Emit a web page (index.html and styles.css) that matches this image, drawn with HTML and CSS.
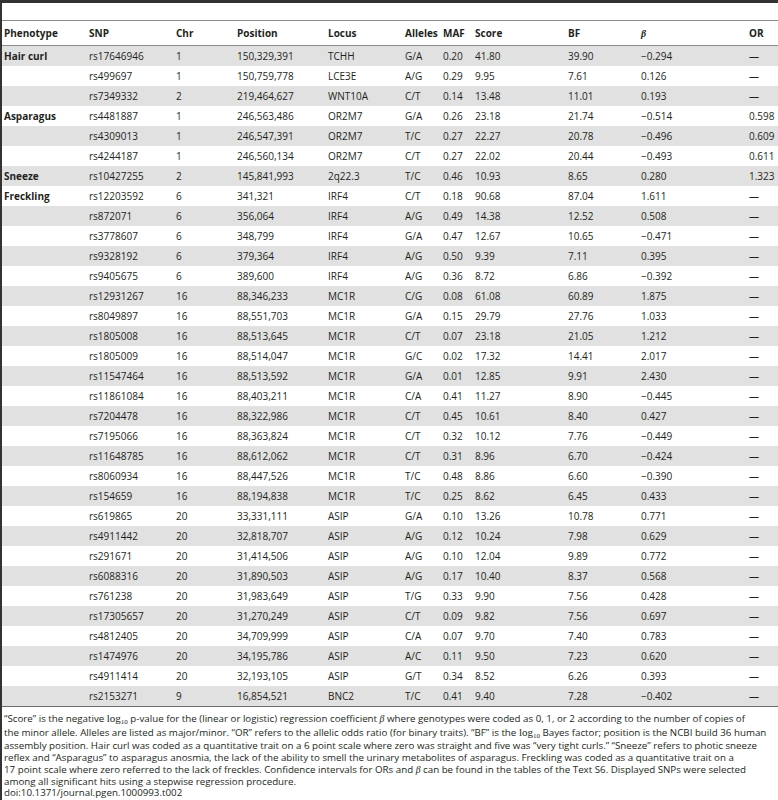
FILE: index.html
```html
<!DOCTYPE html>
<html>
<head>
<meta charset="utf-8">
<link rel="stylesheet" href="styles.css">
</head>
<body>
<div class="frame">
<table class="data">
<colgroup>
<col class="c1"><col class="c2"><col class="c3"><col class="c4"><col class="c5"><col class="c6"><col class="c7"><col class="c8"><col class="c9"><col class="c10"><col class="c11">
</colgroup>
<thead>
<tr><th>Phenotype</th><th>SNP</th><th>Chr</th><th>Position</th><th>Locus</th><th>Alleles</th><th>MAF</th><th>Score</th><th>BF</th><th><span class="beta">β</span></th><th>OR</th></tr>
</thead>
<tbody>
<tr><td class="ph">Hair curl</td><td>rs17646946</td><td>1</td><td>150,329,391</td><td>TCHH</td><td>G/A</td><td>0.20</td><td>41.80</td><td>39.90</td><td>&minus;0.294</td><td>—</td></tr>
<tr><td></td><td>rs499697</td><td>1</td><td>150,759,778</td><td>LCE3E</td><td>A/G</td><td>0.29</td><td>9.95</td><td>7.61</td><td>0.126</td><td>—</td></tr>
<tr><td></td><td>rs7349332</td><td>2</td><td>219,464,627</td><td>WNT10A</td><td>C/T</td><td>0.14</td><td>13.48</td><td>11.01</td><td>0.193</td><td>—</td></tr>
<tr><td class="ph">Asparagus</td><td>rs4481887</td><td>1</td><td>246,563,486</td><td>OR2M7</td><td>G/A</td><td>0.26</td><td>23.18</td><td>21.74</td><td>&minus;0.514</td><td>0.598</td></tr>
<tr><td></td><td>rs4309013</td><td>1</td><td>246,547,391</td><td>OR2M7</td><td>T/C</td><td>0.27</td><td>22.27</td><td>20.78</td><td>&minus;0.496</td><td>0.609</td></tr>
<tr><td></td><td>rs4244187</td><td>1</td><td>246,560,134</td><td>OR2M7</td><td>C/T</td><td>0.27</td><td>22.02</td><td>20.44</td><td>&minus;0.493</td><td>0.611</td></tr>
<tr><td class="ph">Sneeze</td><td>rs10427255</td><td>2</td><td>145,841,993</td><td>2q22.3</td><td>T/C</td><td>0.46</td><td>10.93</td><td>8.65</td><td>0.280</td><td>1.323</td></tr>
<tr><td class="ph">Freckling</td><td>rs12203592</td><td>6</td><td>341,321</td><td>IRF4</td><td>C/T</td><td>0.18</td><td>90.68</td><td>87.04</td><td>1.611</td><td>—</td></tr>
<tr><td></td><td>rs872071</td><td>6</td><td>356,064</td><td>IRF4</td><td>A/G</td><td>0.49</td><td>14.38</td><td>12.52</td><td>0.508</td><td>—</td></tr>
<tr><td></td><td>rs3778607</td><td>6</td><td>348,799</td><td>IRF4</td><td>G/A</td><td>0.47</td><td>12.67</td><td>10.65</td><td>&minus;0.471</td><td>—</td></tr>
<tr><td></td><td>rs9328192</td><td>6</td><td>379,364</td><td>IRF4</td><td>A/G</td><td>0.50</td><td>9.39</td><td>7.11</td><td>0.395</td><td>—</td></tr>
<tr><td></td><td>rs9405675</td><td>6</td><td>389,600</td><td>IRF4</td><td>A/G</td><td>0.36</td><td>8.72</td><td>6.86</td><td>&minus;0.392</td><td>—</td></tr>
<tr><td></td><td>rs12931267</td><td>16</td><td>88,346,233</td><td>MC1R</td><td>C/G</td><td>0.08</td><td>61.08</td><td>60.89</td><td>1.875</td><td>—</td></tr>
<tr><td></td><td>rs8049897</td><td>16</td><td>88,551,703</td><td>MC1R</td><td>G/A</td><td>0.15</td><td>29.79</td><td>27.76</td><td>1.033</td><td>—</td></tr>
<tr><td></td><td>rs1805008</td><td>16</td><td>88,513,645</td><td>MC1R</td><td>C/T</td><td>0.07</td><td>23.18</td><td>21.05</td><td>1.212</td><td>—</td></tr>
<tr><td></td><td>rs1805009</td><td>16</td><td>88,514,047</td><td>MC1R</td><td>G/C</td><td>0.02</td><td>17.32</td><td>14.41</td><td>2.017</td><td>—</td></tr>
<tr><td></td><td>rs11547464</td><td>16</td><td>88,513,592</td><td>MC1R</td><td>G/A</td><td>0.01</td><td>12.85</td><td>9.91</td><td>2.430</td><td>—</td></tr>
<tr><td></td><td>rs11861084</td><td>16</td><td>88,403,211</td><td>MC1R</td><td>C/A</td><td>0.41</td><td>11.27</td><td>8.90</td><td>&minus;0.445</td><td>—</td></tr>
<tr><td></td><td>rs7204478</td><td>16</td><td>88,322,986</td><td>MC1R</td><td>C/T</td><td>0.45</td><td>10.61</td><td>8.40</td><td>0.427</td><td>—</td></tr>
<tr><td></td><td>rs7195066</td><td>16</td><td>88,363,824</td><td>MC1R</td><td>C/T</td><td>0.32</td><td>10.12</td><td>7.76</td><td>&minus;0.449</td><td>—</td></tr>
<tr><td></td><td>rs11648785</td><td>16</td><td>88,612,062</td><td>MC1R</td><td>C/T</td><td>0.31</td><td>8.96</td><td>6.70</td><td>&minus;0.424</td><td>—</td></tr>
<tr><td></td><td>rs8060934</td><td>16</td><td>88,447,526</td><td>MC1R</td><td>T/C</td><td>0.48</td><td>8.86</td><td>6.60</td><td>&minus;0.390</td><td>—</td></tr>
<tr><td></td><td>rs154659</td><td>16</td><td>88,194,838</td><td>MC1R</td><td>T/C</td><td>0.25</td><td>8.62</td><td>6.45</td><td>0.433</td><td>—</td></tr>
<tr><td></td><td>rs619865</td><td>20</td><td>33,331,111</td><td>ASIP</td><td>G/A</td><td>0.10</td><td>13.26</td><td>10.78</td><td>0.771</td><td>—</td></tr>
<tr><td></td><td>rs4911442</td><td>20</td><td>32,818,707</td><td>ASIP</td><td>A/G</td><td>0.12</td><td>10.24</td><td>7.98</td><td>0.629</td><td>—</td></tr>
<tr><td></td><td>rs291671</td><td>20</td><td>31,414,506</td><td>ASIP</td><td>A/G</td><td>0.10</td><td>12.04</td><td>9.89</td><td>0.772</td><td>—</td></tr>
<tr><td></td><td>rs6088316</td><td>20</td><td>31,890,503</td><td>ASIP</td><td>A/G</td><td>0.17</td><td>10.40</td><td>8.37</td><td>0.568</td><td>—</td></tr>
<tr><td></td><td>rs761238</td><td>20</td><td>31,983,649</td><td>ASIP</td><td>T/G</td><td>0.33</td><td>9.90</td><td>7.56</td><td>0.428</td><td>—</td></tr>
<tr><td></td><td>rs17305657</td><td>20</td><td>31,270,249</td><td>ASIP</td><td>C/T</td><td>0.09</td><td>9.82</td><td>7.56</td><td>0.697</td><td>—</td></tr>
<tr><td></td><td>rs4812405</td><td>20</td><td>34,709,999</td><td>ASIP</td><td>C/A</td><td>0.07</td><td>9.70</td><td>7.40</td><td>0.783</td><td>—</td></tr>
<tr><td></td><td>rs1474976</td><td>20</td><td>34,195,786</td><td>ASIP</td><td>A/C</td><td>0.11</td><td>9.50</td><td>7.23</td><td>0.620</td><td>—</td></tr>
<tr><td></td><td>rs4911414</td><td>20</td><td>32,193,105</td><td>ASIP</td><td>G/T</td><td>0.34</td><td>8.52</td><td>6.26</td><td>0.393</td><td>—</td></tr>
<tr><td></td><td>rs2153271</td><td>9</td><td>16,854,521</td><td>BNC2</td><td>T/C</td><td>0.41</td><td>9.40</td><td>7.28</td><td>&minus;0.402</td><td>—</td></tr>
</tbody>
</table>
<p class="note">“Score” is the negative <span class="math">log<span class="sub">10</span></span> p-value for the (linear or logistic) regression coefficient <span class="beta">β</span> where genotypes were coded as 0, 1, or 2 according to the number of copies of<br>the minor allele. Alleles are listed as major/minor. “OR” refers to the allelic odds ratio (for binary traits). “BF” is the <span class="math">log<span class="sub">10</span></span> Bayes factor; position is the NCBI build 36 human<br>assembly position. Hair curl was coded as a quantitative trait on a 6 point scale where zero was straight and five was “very tight curls.” “Sneeze” refers to photic sneeze<br>reflex and “Asparagus” to asparagus anosmia, the lack of the ability to smell the urinary metabolites of asparagus. Freckling was coded as a quantitative trait on a<br>17 point scale where zero referred to the lack of freckles. Confidence intervals for ORs and <span class="beta">β</span> can be found in the tables of the Text S6. Displayed SNPs were selected<br>among all significant hits using a stepwise regression procedure.<br>doi:10.1371/journal.pgen.1000993.t002</p>
</div>
</body>
</html>
```
FILE: styles.css
```css
html, body {
  margin: 0;
  padding: 0;
  background: #fff;
}
.frame {
  width: 776px;
  min-height: 797px;
  border-left: 2px solid #333;
  border-top: 3px solid #333;
  font-family: "Open Sans", "Noto Sans", sans-serif;
  color: #231f20;
}
.data {
  margin-top: 17px;
  width: 776px;
  table-layout: fixed;
  border-collapse: collapse;
  font-size: 10px;
}
.c1 { width: 85px; }
.c2 { width: 87px; }
.c3 { width: 61px; }
.c4 { width: 91px; }
.c5 { width: 77px; }
.c6 { width: 38px; }
.c7 { width: 32px; }
.c8 { width: 93px; }
.c9 { width: 73px; }
.c10 { width: 108px; }
.c11 { width: 31px; }
.data thead tr {
  border-top: 1px solid #8c8c8c;
  border-bottom: 1px solid #8c8c8c;
  height: 25px;
}
.data th {
  text-align: left;
  font-weight: 700;
  padding: 0 0 0 2px;
  white-space: nowrap;
}
.data td {
  padding: 0 0 0 2px;
  height: 20px;
  white-space: nowrap;
}
.data tbody tr:nth-child(odd) {
  background: #e1e1e1;
}
.data tbody tr:last-child {
  border-bottom: 1px solid #6e6e6e;
}
.data td.ph {
  font-weight: 700;
}
.beta {
  font-family: "Liberation Serif", serif;
  font-style: italic;
}
.math {
  font-family: "Liberation Serif", serif;
  font-size: 11px;
}
.sub {
  font-size: 7px;
  position: relative;
  top: 2px;
}
.note {
  margin: 6px 0 0 2px;
  font-size: 9.75px;
  line-height: 11.7px;
  white-space: nowrap;
}
```
